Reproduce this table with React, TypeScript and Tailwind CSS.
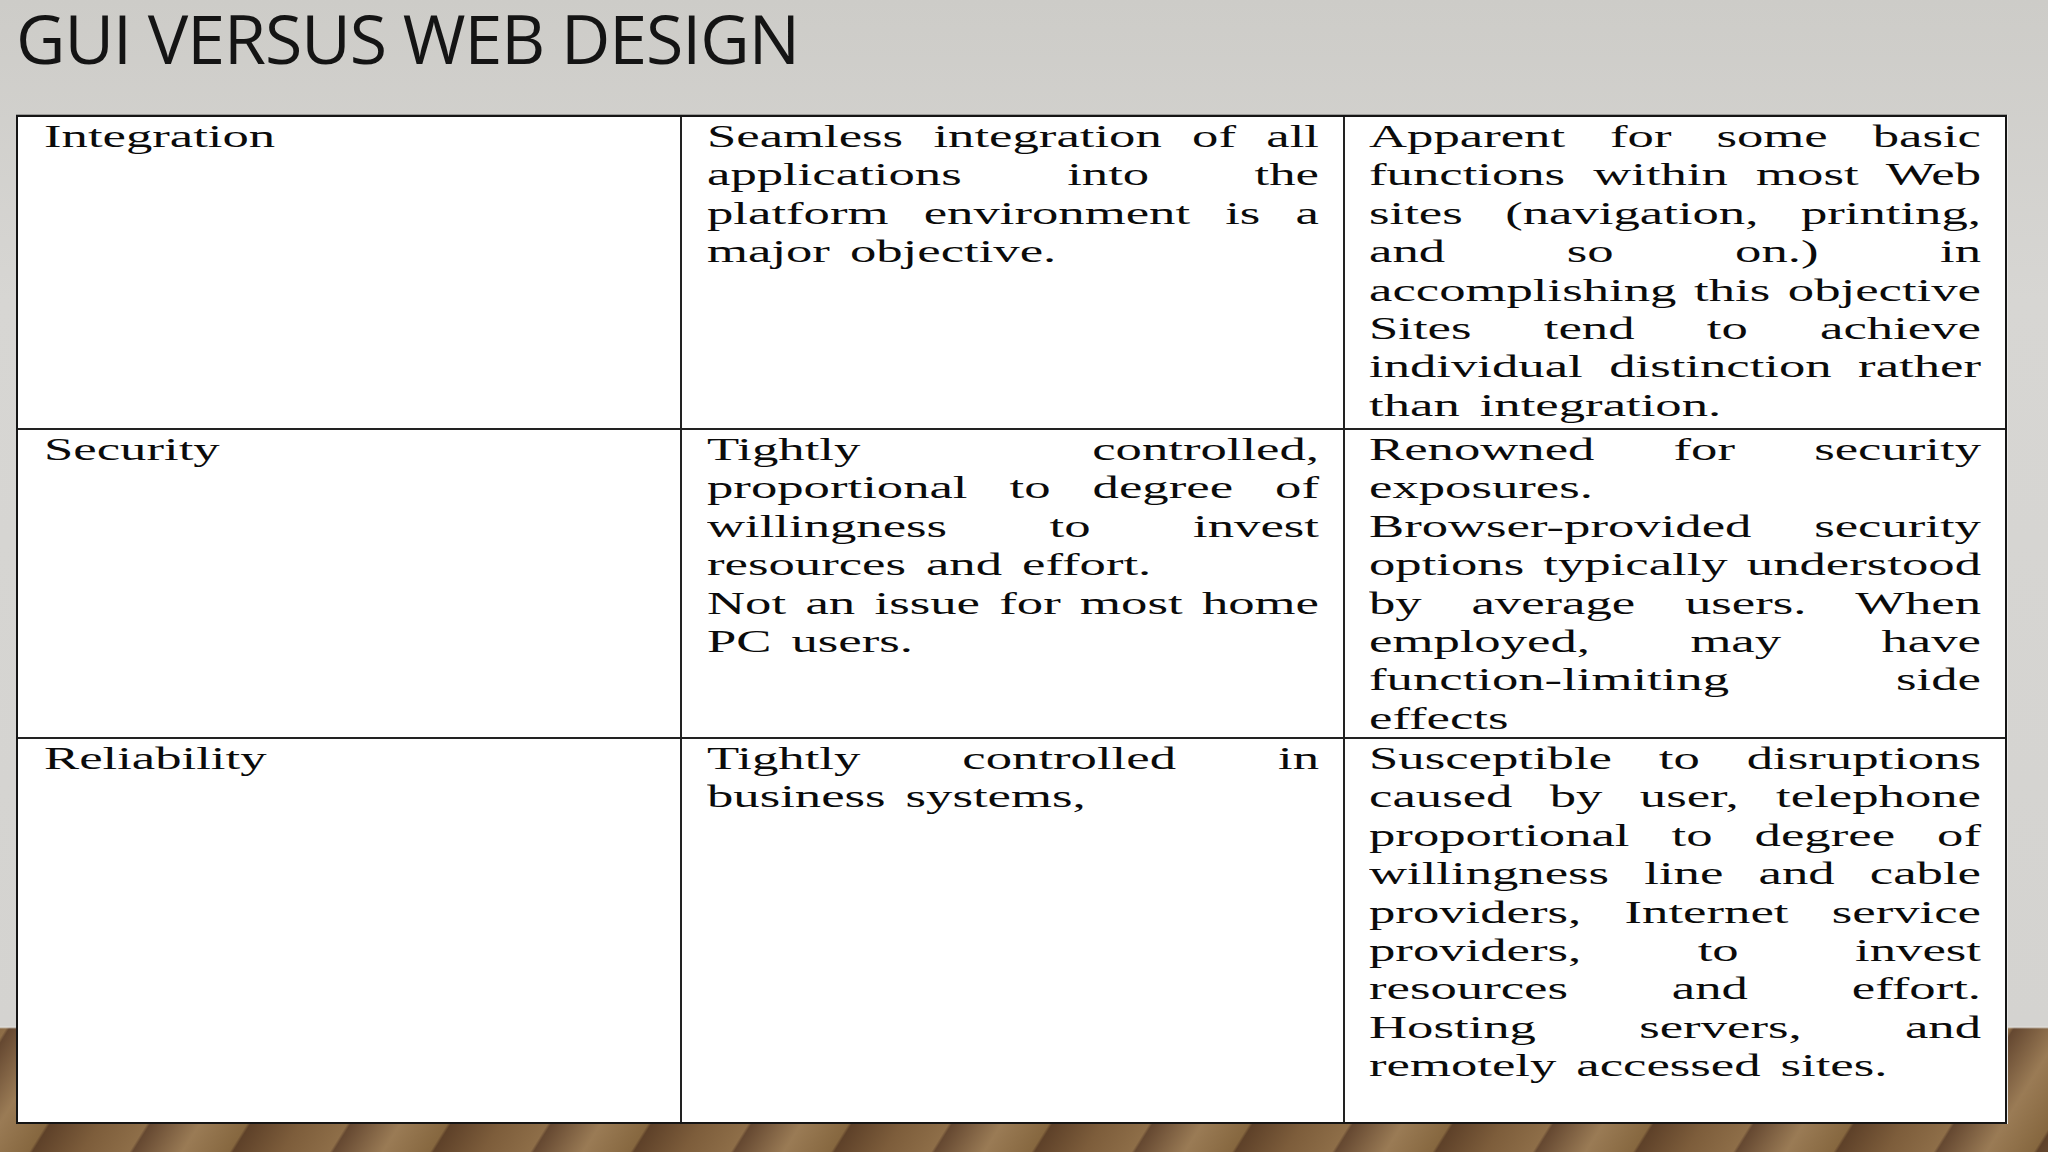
type Cell = string[][]

interface Row {
  label: string
  height: string
  mid: Cell
  right: Cell
}

const rows: Row[] = [
  {
    label: "Integration",
    height: "h-[313px]",
    mid: [["Seamless integration of all", "applications into the", "platform environment is a", "major objective."]],
    right: [
      [
        "Apparent for some basic",
        "functions within most Web",
        "sites (navigation, printing,",
        "and so on.) in",
        "accomplishing this objective",
        "Sites tend to achieve",
        "individual distinction rather",
        "than integration.",
      ],
    ],
  },
  {
    label: "Security",
    height: "h-[309px]",
    mid: [
      ["Tightly controlled,", "proportional to degree of", "willingness to invest", "resources and effort."],
      ["Not an issue for most home", "PC users."],
    ],
    right: [
      ["Renowned for security", "exposures."],
      [
        "Browser-provided security",
        "options typically understood",
        "by average users. When",
        "employed, may have",
        "function-limiting side",
        "effects",
      ],
    ],
  },
  {
    label: "Reliability",
    height: "flex-1",
    mid: [["Tightly controlled in", "business systems,"]],
    right: [
      [
        "Susceptible to disruptions",
        "caused by user, telephone",
        "proportional to degree of",
        "willingness line and cable",
        "providers, Internet service",
        "providers, to invest",
        "resources and effort.",
        "Hosting servers, and",
        "remotely accessed sites.",
      ],
    ],
  },
]

// last line of each paragraph stays ragged, the rest is justified edge to edge
function CellText({ paras }: { paras: Cell }) {
  return (
    <div className="w-[360px] origin-top-left scale-x-[1.7]">
      {paras.map((lines, p) =>
        lines.map((line, i) =>
          i === lines.length - 1 ? (
            <div key={`${p}-${i}`} className="text-left [word-spacing:4px]">
              {line}
            </div>
          ) : (
            <div key={`${p}-${i}`} className="text-justify [text-align-last:justify]">
              {line}
            </div>
          ),
        ),
      )}
    </div>
  )
}

export default function App() {
  return (
    <div className="w-[2048px] h-[1152px] overflow-hidden bg-[linear-gradient(180deg,#cdccc8_0px,#d7d6d3_300px,#d4d3d0_1026px,#e2e1de_1027px,transparent_1029px),repeating-linear-gradient(122deg,#7d5d3b_0px,#8e6e48_40px,#654831_43px,#9a7b55_85px,#86673f_125px,#5e4129_128px,#7d5d3b_170px)]">
      <div className="h-[115px] pl-[16px]">
        <h1 className="text-[68px] leading-[76px] font-normal text-[#141414] font-['Open_Sans',sans-serif] tracking-[-1px]">
          GUI VERSUS WEB DESIGN
        </h1>
      </div>

      <div className="ml-[16px] w-[1991px] h-[1009px] flex flex-col bg-white border-2 border-[#151515] shadow-[0_-1px_0_#9a9a98,1px_0_0_#e8e8e6] font-['Liberation_Serif','Times_New_Roman',serif] text-[31px] leading-[38.4px] text-[#0b0b0b]">
        {rows.map((row, idx) => (
          <div
            key={row.label}
            className={`${row.height} flex ${idx < rows.length - 1 ? "border-b-2 border-[#222]" : ""}`}
          >
            <div className="w-[664px] shrink-0 border-r-2 border-[#222] pl-[26px] pt-px">
              <CellText paras={[[row.label]]} />
            </div>
            <div className="w-[663px] shrink-0 border-r-2 border-[#222] pl-[25px] pt-px">
              <CellText paras={row.mid} />
            </div>
            <div className="flex-1 pl-[24px] pt-px">
              <CellText paras={row.right} />
            </div>
          </div>
        ))}
      </div>
    </div>
  )
}
